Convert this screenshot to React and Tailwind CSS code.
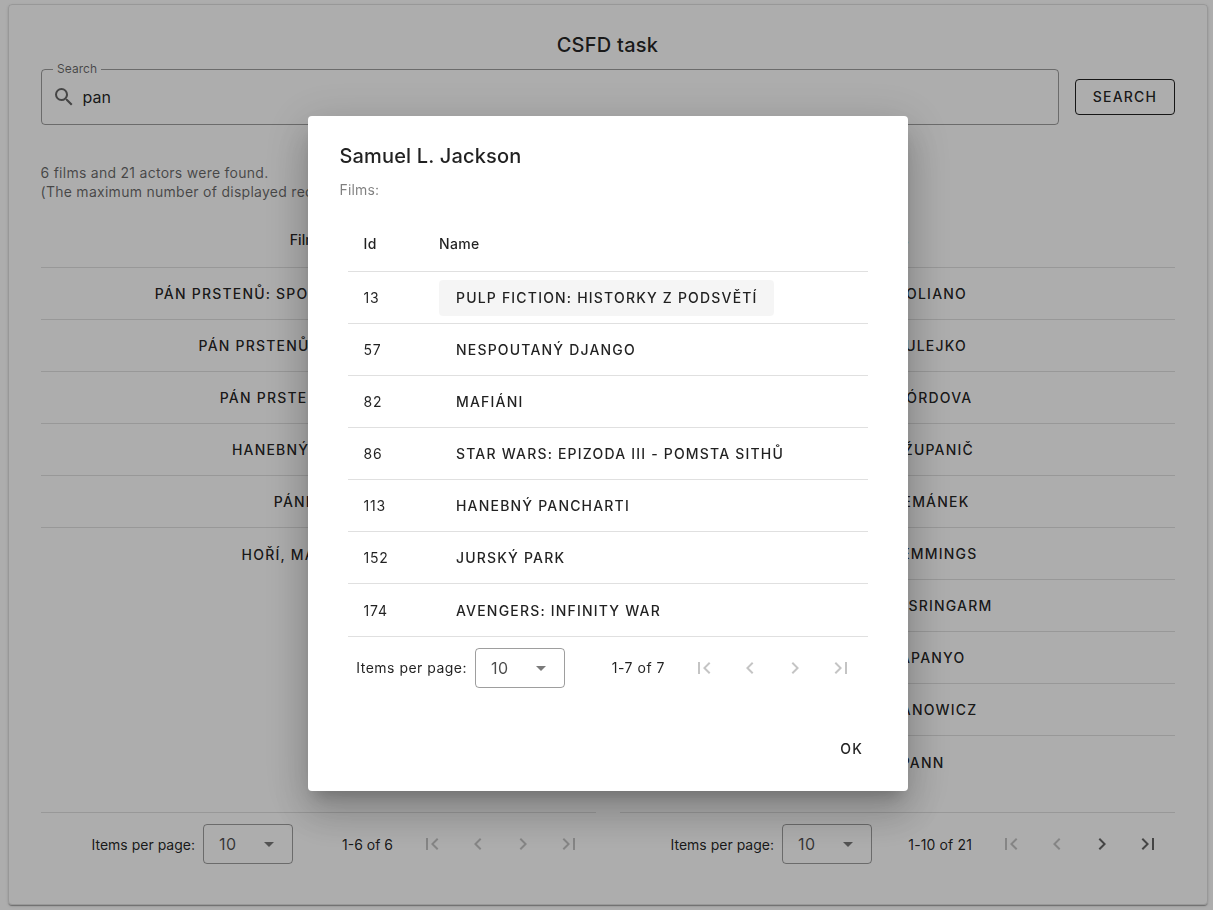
import React from "react";

const filmRows = [
  ["Pán prstenů: Společenstvo Prstenu", ""],
  ["Pán prstenů: Návrat krále", "pl-px"],
  ["Pán prstenů: Dvě věže", "pl-px"],
  ["Hanebný pancharti", "pl-px"],
  ["Pánbíček", "pr-[10px]"],
  ["Hoří, má panenko", "pl-px"],
];
const actorRows = [
  ["Joe Pantoliano", "w-[139px]"],
  ["Štěpán Tulejko", "w-[139px]"],
  ["Pancho Córdova", "w-[150px]"],
  ["Marko Županič", "w-[153px]"],
  ["Štěpán Zemánek", "w-[144px]"],
  ["Pan Hemmings", "w-[160px]"],
  ["Pankorn Sringarm", "w-[190px]"],
  ["Joel Apanyo", "w-[136px]"],
  ["Jan Panowicz", "w-[160px]"],
  ["Jan Pann", "w-[94px]"],
];
const dialogFilms = [
  [13, "Pulp Fiction: Historky z podsvětí"],
  [57, "Nespoutaný Django"],
  [82, "Mafiáni"],
  [86, "Star Wars: Epizoda III - Pomsta Sithů"],
  [113, "Hanebný pancharti"],
  [152, "Jurský park"],
  [174, "Avengers: Infinity War"],
];

const paths = {
  first: "M18.41 16.59L13.82 12l4.59-4.59L17 6l-6 6 6 6zM6 6h2v12H6z",
  prev: "M15.41 16.58L10.83 12l4.58-4.59L14 6l-6 6 6 6 1.41-1.42Z",
  next: "M8.59 16.58L13.17 12 8.59 7.41 10 6l6 6-6 6-1.41-1.42Z",
  last: "M5.59 7.41L10.18 12l-4.59 4.59L7 18l6-6-6-6zM16 6h2v12h-2z",
  down: "M7 10l5 5 5-5z",
  search:
    "M9.5 3A6.5 6.5 0 0 1 16 9.5c0 1.61-.59 3.09-1.56 4.23l.27.27h.79l5 5-1.5 1.5-5-5v-.79l-.27-.27A6.516 6.516 0 0 1 9.5 16 6.5 6.5 0 0 1 3 9.5 6.5 6.5 0 0 1 9.5 3m0 2C7 5 5 7 5 9.5S7 14 9.5 14 14 12 14 9.5 12 5 9.5 5Z",
};

function Icon({ name, className }) {
  return (
    <svg viewBox="0 0 24 24" fill="currentColor" className={className}>
      <path d={paths[name]} />
    </svg>
  );
}

function Pagination({ info, canNext, textClass, infoClass }) {
  const on = "text-black/60";
  const off = "text-black/23";
  return (
    <div className="flex h-10 items-center justify-end text-sm text-black/87">
      <span className={textClass}>Items per page:</span>
      <div className="ml-2 flex h-10 w-[90px] items-center justify-between rounded border border-black/38 pr-[11px] pl-[15px] text-base tracking-[0.4px] text-black/70">
        <span>10</span>
        <Icon name="down" className="size-6 text-black/52" />
      </div>
      <div className={`flex w-[117px] justify-end pr-[17px] ${infoClass}`}>{info}</div>
      <div className="flex">
        {["first", "prev", "next", "last"].map((n) => (
          <button key={n} className={`flex h-10 w-[45.5px] items-center justify-center pr-px ${canNext && (n === "next" || n === "last") ? on : off}`}>
            <Icon name={n} className="size-6" />
          </button>
        ))}
      </div>
    </div>
  );
}

function ResultTable({ title, rows, info, canNext, infoClass }) {
  return (
    <section className="flex w-[555px] flex-col">
      <div className="flex h-14 items-center justify-center border-b border-black/12 pr-[22px] text-sm font-medium">{title}</div>
      <div className="h-[544px]">
        {rows.map(([name, width], i) => (
          <div
            key={name}
            className={`flex items-center justify-center text-sm font-medium tracking-[1.2px] whitespace-nowrap uppercase ${i < rows.length - 1 ? "h-[52px] border-b border-black/12" : "h-[53px]"}`}
          >
            <span className={`flex justify-end ${width}`}>{name}</span>
          </div>
        ))}
      </div>
      <div className="border-t border-black/12 pt-[11px] pr-[4px]">
        <Pagination info={info} canNext={canNext} textClass="pt-px" infoClass={infoClass} />
      </div>
    </section>
  );
}

export default function App() {
  return (
    <div className="h-[910px] w-[1213px] overflow-hidden bg-white px-2 pt-1 font-['Inter',sans-serif] text-black/87">
      <main className="h-[901px] w-[1200px] rounded border border-black/12 px-8 pt-6 shadow-[0_2px_1px_-1px_rgba(0,0,0,0.2),0_1px_1px_0_rgba(0,0,0,0.14),0_1px_3px_0_rgba(0,0,0,0.12)]">
        <h1 className="pr-px text-center text-xl leading-8 font-medium tracking-[0.25px]">CSFD task</h1>
        <div className="mt-2 flex items-center gap-4">
          <div className="relative flex h-14 w-[1018px] items-center rounded border border-black/38 pl-[10px]">
            <span className="absolute -top-[9px] left-[11px] bg-white px-1 text-xs leading-4 tracking-[0.05px] text-black/60">Search</span>
            <Icon name="search" className="size-6 text-black/60" />
            <span className="ml-[6.5px] text-base">pan</span>
          </div>
          <button className="h-9 w-[100px] rounded border border-black/87 text-sm font-medium tracking-[1.2px]">SEARCH</button>
        </div>
        <div className="mt-[38px] -ml-[0.5px] text-sm leading-[19px] tracking-[0.27px] text-black/60">
          <p>6 films and 21 actors were found.</p>
          <p>(The maximum number of displayed records is 100.)</p>
        </div>
        <div className="mt-[11px] flex gap-6">
          <ResultTable title="Films" rows={filmRows} info="1-6 of 6" infoClass="pt-px" />
          <ResultTable title="Actors" rows={actorRows} info="1-10 of 21" infoClass="pt-px tracking-[0.13px]" canNext />
        </div>
      </main>

      <div className="fixed inset-0 bg-black/32" />
      <div className="fixed inset-0 flex items-start justify-center pt-[116px] pl-[3px]">
        <div
          role="dialog"
          className="h-[675px] w-[600px] rounded bg-white px-8 pt-6 shadow-[0_11px_15px_-7px_rgba(0,0,0,0.2),0_24px_38px_3px_rgba(0,0,0,0.14),0_9px_46px_8px_rgba(0,0,0,0.12)]"
        >
          <h2 className="-ml-[0.5px] text-xl leading-8 font-medium tracking-[0.16px]">Samuel L. Jackson</h2>
          <p className="mt-2 -ml-[0.5px] text-sm leading-5 tracking-[0.15px] text-black/50">Films:</p>
          <div className="mx-2 mt-4 text-sm">
            <div className="flex h-14 items-center border-b border-black/12 font-medium tracking-[0.35px]">
              <span className="w-[91px] pl-[15.5px]">Id</span>
              <span>Name</span>
            </div>
            {dialogFilms.map(([id, name], i) => (
              <div key={id} className={`flex items-center border-b border-black/12 ${i === 6 ? "h-[53px] pt-px" : "h-[52px]"}`}>
                <span className="w-[91px] pl-[15.5px] tracking-[0.8px]">{id}</span>
                <button className={`h-9 rounded pr-4 pl-[17px] font-medium tracking-[1.19px] uppercase ${i === 0 ? "bg-black/4" : ""}`}>{name}</button>
              </div>
            ))}
            <div className="pt-[11px] pr-[4px]">
              <Pagination info="1-7 of 7" textClass="tracking-[0.48px]" infoClass="tracking-[0.52px]" />
            </div>
          </div>
          <div className="mt-[43px] flex justify-end pr-[5px]">
            <button className="h-9 px-2 text-sm font-medium tracking-[1.2px]">OK</button>
          </div>
        </div>
      </div>
    </div>
  );
}
